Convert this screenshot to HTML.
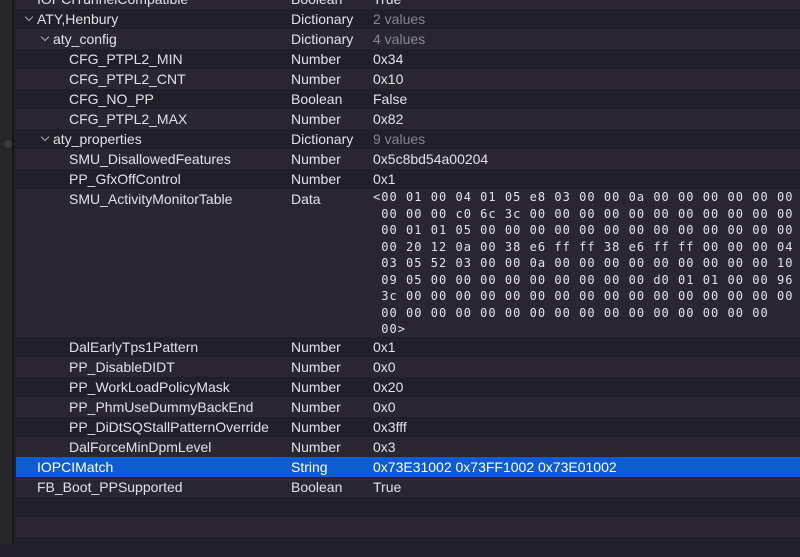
<!DOCTYPE html>
<html><head><style>
*{margin:0;padding:0;box-sizing:border-box}
body{width:800px;height:544px;overflow:hidden;background:#221f28;font-family:"Liberation Sans",sans-serif;font-size:14px;color:#e2e1e6;position:relative}
.side{position:absolute;left:0;top:0;width:14px;height:544px;background:#26272a;border-right:2px solid #151517}
.dot{position:absolute;left:4px;top:140px;width:8px;height:8px;border-radius:50%;background:#3a3b3e}
.r{position:absolute;left:16px;right:0;height:20px;line-height:20px;white-space:nowrap}
.l{background:#2a2731}.d{background:#211f27}.s{background:#0f5bd2;color:#fff}
.k{position:absolute}.t{position:absolute;left:275px}.v{position:absolute;left:357px}
.g{color:#88868c}
.c{position:absolute;width:6px;height:6px;border-right:1.5px solid #aaa;border-bottom:1.5px solid #aaa;transform:rotate(45deg);top:5px}
.hex{position:absolute;left:357px;top:0px;font-family:"DejaVu Sans Mono","Liberation Mono",monospace;font-size:12px;letter-spacing:1.02px;line-height:16.5px;white-space:pre;color:#e4e3e8}
</style></head><body>
<div class="side"><div class="dot"></div></div>
<div class="r l" style="top:-11px"><span class="k" style="left:21px">IOPCITunnelCompatible</span><span class="t">Boolean</span><span class="v">True</span></div>
<div class="r d" style="top:9px"><i class="c" style="left:10px"></i><span class="k" style="left:21px">ATY,Henbury</span><span class="t">Dictionary</span><span class="v g">2 values</span></div>
<div class="r l" style="top:29px"><i class="c" style="left:26px"></i><span class="k" style="left:37px">aty_config</span><span class="t">Dictionary</span><span class="v g">4 values</span></div>
<div class="r d" style="top:49px"><span class="k" style="left:53px">CFG_PTPL2_MIN</span><span class="t">Number</span><span class="v">0x34</span></div>
<div class="r l" style="top:69px"><span class="k" style="left:53px">CFG_PTPL2_CNT</span><span class="t">Number</span><span class="v">0x10</span></div>
<div class="r d" style="top:89px"><span class="k" style="left:53px">CFG_NO_PP</span><span class="t">Boolean</span><span class="v">False</span></div>
<div class="r l" style="top:109px"><span class="k" style="left:53px">CFG_PTPL2_MAX</span><span class="t">Number</span><span class="v">0x82</span></div>
<div class="r d" style="top:129px"><i class="c" style="left:26px"></i><span class="k" style="left:37px">aty_properties</span><span class="t">Dictionary</span><span class="v g">9 values</span></div>
<div class="r l" style="top:149px"><span class="k" style="left:53px">SMU_DisallowedFeatures</span><span class="t">Number</span><span class="v">0x5c8bd54a00204</span></div>
<div class="r d" style="top:169px"><span class="k" style="left:53px">PP_GfxOffControl</span><span class="t">Number</span><span class="v">0x1</span></div>
<div class="r l" style="top:189px;height:148px"><span class="k" style="left:53px">SMU_ActivityMonitorTable</span><span class="t">Data</span><div class="hex">&lt;00 01 00 04 01 05 e8 03 00 00 0a 00 00 00 00 00 00
 00 00 00 c0 6c 3c 00 00 00 00 00 00 00 00 00 00 00
 00 01 01 05 00 00 00 00 00 00 00 00 00 00 00 00 00
 00 20 12 0a 00 38 e6 ff ff 38 e6 ff ff 00 00 00 04
 03 05 52 03 00 00 0a 00 00 00 00 00 00 00 00 00 10
 09 05 00 00 00 00 00 00 00 00 00 d0 01 01 00 00 96
 3c 00 00 00 00 00 00 00 00 00 00 00 00 00 00 00 00
 00 00 00 00 00 00 00 00 00 00 00 00 00 00 00 00
 00&gt;</div></div>
<div class="r d" style="top:337px"><span class="k" style="left:53px">DalEarlyTps1Pattern</span><span class="t">Number</span><span class="v">0x1</span></div>
<div class="r l" style="top:357px"><span class="k" style="left:53px">PP_DisableDIDT</span><span class="t">Number</span><span class="v">0x0</span></div>
<div class="r d" style="top:377px"><span class="k" style="left:53px">PP_WorkLoadPolicyMask</span><span class="t">Number</span><span class="v">0x20</span></div>
<div class="r l" style="top:397px"><span class="k" style="left:53px">PP_PhmUseDummyBackEnd</span><span class="t">Number</span><span class="v">0x0</span></div>
<div class="r d" style="top:417px"><span class="k" style="left:53px">PP_DiDtSQStallPatternOverride</span><span class="t">Number</span><span class="v">0x3fff</span></div>
<div class="r l" style="top:437px"><span class="k" style="left:53px">DalForceMinDpmLevel</span><span class="t">Number</span><span class="v">0x3</span></div>
<div class="r s" style="top:457px"><span class="k" style="left:21px">IOPCIMatch</span><span class="t">String</span><span class="v">0x73E31002 0x73FF1002 0x73E01002</span></div>
<div class="r l" style="top:477px"><span class="k" style="left:21px">FB_Boot_PPSupported</span><span class="t">Boolean</span><span class="v">True</span></div>
<div class="r d" style="top:497px"></div>
<div class="r l" style="top:517px"></div>
<div class="r d" style="top:537px"></div>
</body></html>
